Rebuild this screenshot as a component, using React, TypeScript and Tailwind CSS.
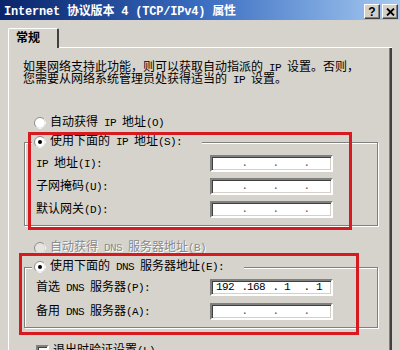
import React from "react";

// SimSun-like mix: ASCII runs are half-width (6px), CJK full-width (12px)
const T = ({ s }: { s: string }) => (
  <>
    {s.split(/([\x20-\x7e]+)/).map((p, i) =>
      /^[\x20-\x7e]+$/.test(p) ? (
        <span key={i} className="text-[11px] tracking-[-0.6px]">
          {p}
        </span>
      ) : (
        p
      )
    )}
  </>
);

const Radio = ({ on, off }: { on?: boolean; off?: boolean }) => (
  <svg width="12" height="12" viewBox="0 0 12 12" className="shrink-0">
    <circle cx="6" cy="6" r="5.5" fill={off ? "#e6e4df" : "#fff"} stroke="#8c8c8c" />
    <path d="M2.1 9.9A5.5 5.5 0 0 0 9.9 2.1" fill="none" stroke="#fff" />
    {on && <circle cx="6" cy="6" r="2" fill="#000" />}
  </svg>
);

const IpBox = ({ v }: { v?: string[] }) => (
  <div className="flex h-[17px] w-[123px] items-center border-2 border-t-[#808080] border-l-[#808080] border-r-white border-b-white bg-white pl-[2px] leading-[13px] shadow-[inset_1px_1px_0_#404040,inset_-1px_-1px_0_#d4d0c8]">
    {[0, 1, 2, 3].map((i) => (
      <React.Fragment key={i}>
        {i > 0 && (
          <span className={`flex w-[1px] justify-center ${v ? "text-black" : "text-[#555]"}`}>
            <T s="." />
          </span>
        )}
        <span className={i < 3 ? "w-[30px] pr-[8px] text-center" : "flex-1 text-center"}>
          {v && <T s={v[i]} />}
        </span>
      </React.Fragment>
    ))}
  </div>
);

const Row = ({ label, v }: { label: string; v?: string[] }) => (
  <div className="flex h-[17px] items-center">
    <div className="w-[174px] whitespace-nowrap">
      <T s={label} />
    </div>
    <IpBox v={v} />
  </div>
);

const Group = ({ legend, children, gap }: { legend: string; children: React.ReactNode; gap: string }) => (
  <fieldset className="ml-[15px] mr-[12px] mt-[3px] border border-[#808080] pb-[7px] shadow-[inset_1px_1px_0_#fff,1px_1px_0_#fff]">
    <legend className="ml-[7px] flex h-[16px] items-center gap-[4px] bg-[#d6d3cc] pl-[2px] pr-[20px] whitespace-nowrap">
      <Radio on />
      <span>
        <T s={legend} />
      </span>
    </legend>
    <div className={`flex flex-col pl-[11px] ${gap}`}>{children}</div>
  </fieldset>
);

const TitleBtn = ({ children }: { children: React.ReactNode }) => (
  <div className="flex h-[15px] w-[16px] items-center justify-center border border-t-white border-l-white border-r-[#404040] border-b-[#404040] bg-[#d4d0c8] shadow-[inset_-1px_-1px_0_#808080]">
    {children}
  </div>
);

export default function App() {
  return (
    <div className="relative h-[350px] w-[400px] overflow-hidden bg-[#d6d3cc] font-['Liberation_Mono','Noto_Sans_CJK_SC',monospace] text-[12px] leading-[16px] text-black">
      {/* title bar */}
      <div className="flex h-[20px] items-start bg-linear-to-r from-[#0a246a] via-[#3a6cc0] to-[#a6caf0] pl-[4px] pr-[2px]">
        <div className="pt-[4px] font-bold leading-[16px] tracking-[-0.2px] whitespace-nowrap text-white">
          Internet 协议版本 4 (TCP/IPv4) 属性
        </div>
        <div className="ml-auto mt-[4px] flex gap-[2px]">
          <TitleBtn>
            <span className="font-['Liberation_Sans',sans-serif] text-[12px] font-bold leading-none">?</span>
          </TitleBtn>
          <TitleBtn>
            <svg width="9" height="8" viewBox="0 0 9 8">
              <path d="M1 0.5L8 7.5M8 0.5L1 7.5" stroke="#000" strokeWidth="1.8" />
            </svg>
          </TitleBtn>
        </div>
      </div>

      {/* tab strip */}
      <div className="mx-[8px] mt-[8px] flex h-[20px]">
        <div className="w-[51px] rounded-t-[2px] border-l border-t border-white border-r-2 border-r-[#404040] pl-[7px] pt-[2px] font-semibold">
          常规
        </div>
        <div className="flex-1 border-b border-white" />
      </div>

      {/* panel */}
      <div className="mx-[8px] h-[320px] border-l border-white border-r-2 border-r-[#404040] pt-[14px] shadow-[inset_-1px_0_0_#808080]">
        <div className="ml-[14px] whitespace-nowrap leading-[12px]">
          <div>
            <T s="如果网络支持此功能，则可以获取自动指派的 IP 设置。否则，" />
          </div>
          <div>
            <T s="您需要从网络系统管理员处获得适当的 IP 设置。" />
          </div>
        </div>

        <div className="ml-[25px] mt-[29px] flex h-[16px] items-center gap-[4px]">
          <Radio />
          <span>
            <T s="自动获得 IP 地址(O)" />
          </span>
        </div>

        <Group legend="使用下面的 IP 地址(S):" gap="gap-[6px] pt-[5px]">
          <Row label="IP 地址(I):" />
          <Row label="子网掩码(U):" />
          <Row label="默认网关(D):" />
        </Group>

        <div className="ml-[25px] mt-[14px] flex h-[16px] items-center gap-[4px] text-[#8a8a8a] [text-shadow:1px_1px_0_#fff]">
          <Radio off />
          <span>
            <T s="自动获得 DNS 服务器地址(B)" />
          </span>
        </div>

        <Group legend="使用下面的 DNS 服务器地址(E):" gap="gap-[7px] pt-[4px]">
          <Row label="首选 DNS 服务器(P):" v={["192", "168", "1", "1"]} />
          <Row label="备用 DNS 服务器(A):" />
        </Group>

        <div className="ml-[27px] mt-[15px] flex h-[16px] items-center gap-[4px]">
          <div className="h-[13px] w-[13px] border-2 border-t-[#808080] border-l-[#808080] border-r-white border-b-white bg-white shadow-[inset_1px_1px_0_#404040]" />
          <span>
            <T s="退出时验证设置(L)" />
          </span>
        </div>
      </div>

      {/* red annotation frames */}
      <div className="pointer-events-none absolute left-[28px] top-[132px] h-[98px] w-[324px] border-[3px] border-[#d71920]" />
      <div className="pointer-events-none absolute left-[19px] top-[253px] h-[82px] w-[340px] border-[3px] border-[#d71920]" />
    </div>
  );
}
